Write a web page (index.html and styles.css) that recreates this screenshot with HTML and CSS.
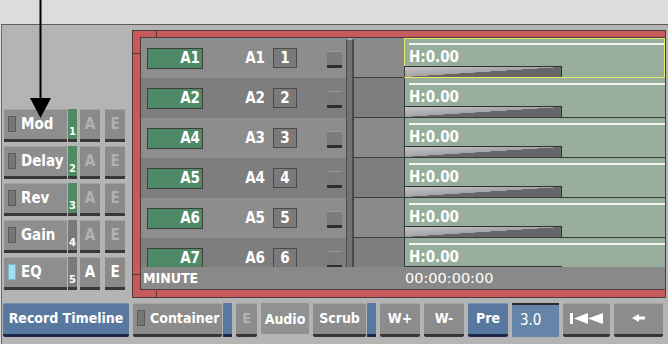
FILE: index.html
```html
<!DOCTYPE html>
<html lang="en">
  <head>
    <meta charset="UTF-8" />
    <title>Audio Tracks</title>
    <link rel="stylesheet" href="styles.css">
  </head>
  <body>
    <div class="top"></div>

    <div class="panel">
      <div class="main">
        <div class="fx">
          <div class="fx-row">
            <div class="fx-btn"><span class="led"></span>Mod</div>
            <div class="strip green">1</div>
            <div class="sq dim">A</div>
            <div class="sq sq-e dim">E</div>
          </div>
          <div class="fx-row">
            <div class="fx-btn"><span class="led"></span>Delay</div>
            <div class="strip green">2</div>
            <div class="sq dim">A</div>
            <div class="sq sq-e dim">E</div>
          </div>
          <div class="fx-row">
            <div class="fx-btn"><span class="led"></span>Rev</div>
            <div class="strip green">3</div>
            <div class="sq dim">A</div>
            <div class="sq sq-e dim">E</div>
          </div>
          <div class="fx-row">
            <div class="fx-btn"><span class="led"></span>Gain</div>
            <div class="strip">4</div>
            <div class="sq dim">A</div>
            <div class="sq sq-e dim">E</div>
          </div>
          <div class="fx-row">
            <div class="fx-btn"><span class="led lit"></span>EQ</div>
            <div class="strip">5</div>
            <div class="sq">A</div>
            <div class="sq sq-e">E</div>
          </div>
        </div>

        <div class="frame">
          <div class="tracks">
            <div class="list">
              <div class="heads">
                <div class="head"><span class="name">A1</span><span class="label">A1</span><span class="num">1</span><span class="mute"></span></div>
                <div class="head"><span class="name">A2</span><span class="label">A2</span><span class="num">2</span><span class="mute"></span></div>
                <div class="head"><span class="name">A4</span><span class="label">A3</span><span class="num">3</span><span class="mute"></span></div>
                <div class="head"><span class="name">A5</span><span class="label">A4</span><span class="num">4</span><span class="mute"></span></div>
                <div class="head"><span class="name">A6</span><span class="label">A5</span><span class="num">5</span><span class="mute"></span></div>
                <div class="head"><span class="name">A7</span><span class="label">A6</span><span class="num">6</span><span class="mute"></span></div>
              </div>
              <div class="scroll"></div>
              <div class="lanes">
                <div class="lane"><div class="cell"></div><div class="clip selected"><div class="clip-line"></div><div class="clip-text">H:0.00</div><div class="ramp"></div></div></div>
                <div class="lane"><div class="cell"></div><div class="clip"><div class="clip-line"></div><div class="clip-text">H:0.00</div><div class="ramp"></div></div></div>
                <div class="lane"><div class="cell"></div><div class="clip"><div class="clip-line"></div><div class="clip-text">H:0.00</div><div class="ramp"></div></div></div>
                <div class="lane"><div class="cell"></div><div class="clip"><div class="clip-line"></div><div class="clip-text">H:0.00</div><div class="ramp"></div></div></div>
                <div class="lane"><div class="cell"></div><div class="clip"><div class="clip-line"></div><div class="clip-text">H:0.00</div><div class="ramp"></div></div></div>
                <div class="lane"><div class="cell"></div><div class="clip"><div class="clip-line"></div><div class="clip-text">H:0.00</div><div class="ramp"></div></div></div>
              </div>
            </div>
            <div class="timebar">
              <span class="unit">MINUTE</span>
              <span class="timecode">00:00:00:00</span>
            </div>
          </div>
        </div>
      </div>

      <div class="toolbar">
        <div class="btn blue w-record">Record Timeline</div>
        <div class="group">
          <div class="btn w-container"><span class="led"></span>Container</div>
          <div class="bar-strip"></div>
        </div>
        <div class="btn dim w-e">E</div>
        <div class="flat w-audio">Audio</div>
        <div class="group">
          <div class="btn w-scrub">Scrub</div>
          <div class="bar-strip"></div>
        </div>
        <div class="btn w-small">W+</div>
        <div class="btn w-small">W-</div>
        <div class="btn blue w-small">Pre</div>
        <div class="field">3.0</div>
        <div class="btn w-icon">
          <svg width="34" height="11" viewBox="0 0 34 11">
            <rect x="0" y="0" width="3" height="11" fill="#fff" />
            <polygon points="4,5.5 18,0 18,11" fill="#fff" />
            <polygon points="18,5.5 33,0 33,11" fill="#fff" />
          </svg>
        </div>
        <div class="btn w-last">
          <svg width="14" height="8" viewBox="0 0 14 8">
            <polygon points="0,4 7,0 7,8" fill="#fff" />
            <rect x="7" y="2.5" width="6" height="3" fill="#fff" />
          </svg>
        </div>
      </div>
    </div>

    <svg class="pointer" width="60" height="120" viewBox="0 0 60 120">
      <line x1="40.5" y1="0" x2="40.5" y2="100" stroke="#000" stroke-width="2" />
      <polygon points="30,98 51,98 40.5,118" fill="#000" />
    </svg>
  </body>
</html>
```

FILE: styles.css
```css
body {
  margin: 0;
  width: 668px;
  height: 344px;
  overflow: hidden;
  position: relative;
  background-color: #dcdcdc;
  color: #fff;
  font-family: "DejaVu Sans", "Liberation Sans", sans-serif;
  font-stretch: condensed;
  font-weight: bold;
  font-size: 15px;
}

.top {
  height: 24px;
}

.pointer {
  position: absolute;
  left: 0;
  top: 0;
}

.panel {
  height: 319px;
  margin-left: 1px;
  border-top: 1px solid #5e5e5e;
  border-left: 1px solid #6e6e6e;
  background-color: #b4b4b4;
}

.main {
  display: flex;
  padding-top: 5px;
}

/* effect buttons */

.fx {
  width: 128px;
  padding: 79px 0 0 2px;
  display: flex;
  flex-direction: column;
  gap: 4px;
}

.fx-row {
  display: flex;
  height: 33px;
}

.fx-btn {
  width: 63px;
  box-sizing: border-box;
  display: flex;
  align-items: center;
  padding: 0 0 2px 4px;
  background-color: #8e8e8e;
  border-top: 1px solid #a2a2a2;
  border-bottom: 3px solid #383838;
}

.led {
  width: 8px;
  height: 16px;
  box-sizing: border-box;
  margin-right: 5px;
  background-color: #767676;
  border: 1px solid #5c5c5c;
}

.led.lit {
  background-color: #a4def6;
  border-color: #7ab6cc;
}

.strip {
  width: 9px;
  margin-left: 1px;
  box-sizing: border-box;
  padding: 0 0 1px 1px;
  display: flex;
  align-items: flex-end;
  font-size: 11px;
  line-height: 12px;
  background-color: #7a7a7a;
  border-bottom: 3px solid #383838;
}

.strip.green {
  background-color: #4f8a62;
}

.sq {
  width: 20px;
  margin-left: 3px;
  box-sizing: border-box;
  display: flex;
  align-items: center;
  justify-content: center;
  padding-bottom: 2px;
  background-color: #8a8a8a;
  border-top: 1px solid #a0a0a0;
  border-bottom: 3px solid #383838;
}

.sq-e {
  margin-left: 5px;
}

.dim {
  color: #b2b2b2;
}

/* track frame */

.frame {
  position: relative;
  width: 534px;
  height: 268px;
  box-sizing: border-box;
  padding: 6px 0 6px 7px;
  background-color: #c75a5a;
  border: 1px solid #4e3a3a;
}

.frame::before {
  content: "";
  position: absolute;
  left: 23px;
  top: 0;
  width: 1px;
  height: 6px;
  background-color: #4e3a3a;
  box-shadow: 0 260px 0 #4e3a3a;
}

.frame::after {
  content: "";
  position: absolute;
  left: 0;
  top: 22px;
  width: 7px;
  height: 1px;
  background-color: #4e3a3a;
  box-shadow: 0 221px 0 #4e3a3a;
}

.tracks {
  border-top: 1px solid #4e3a3a;
  border-left: 1px solid #4e3a3a;
  border-bottom: 1px solid #4e3a3a;
  background-color: #8a8a8a;
}

.list {
  display: flex;
  height: 229px;
  overflow: hidden;
}

.heads {
  width: 205px;
}

.head {
  height: 40px;
  display: flex;
  align-items: center;
  padding-left: 6px;
  background-color: #8d8d8d;
}

.head:nth-child(even) {
  background-color: #7e7e7e;
}

.name {
  width: 56px;
  height: 21px;
  box-sizing: border-box;
  padding-right: 2px;
  text-align: right;
  line-height: 19px;
  background-color: #4e8a68;
  border: 1px solid #3e3e3e;
}

.label {
  width: 70px;
  box-sizing: border-box;
  padding-right: 8px;
  text-align: right;
}

.num {
  width: 24px;
  height: 20px;
  box-sizing: border-box;
  text-align: center;
  line-height: 18px;
  background-color: #7a7a7a;
  border: 1px solid #4a4a4a;
}

.mute {
  width: 15px;
  height: 17px;
  margin: 2px 0 0 30px;
  box-sizing: border-box;
  background-color: #7c7c7c;
  border-top: 1px solid #9a9a9a;
  border-bottom: 3px solid #2e2e2e;
  border-radius: 1px;
}

.scroll {
  width: 8px;
  box-sizing: border-box;
  background-color: #727272;
  border-left: 1px solid #4a4a4a;
  border-right: 2px solid #4a4a4a;
  border-top: 2px solid #a8a8a8;
}

.lanes {
  flex: 1;
}

.lane {
  height: 40px;
  display: flex;
}

.cell {
  width: 50px;
  box-sizing: border-box;
  background-color: #8a8a8a;
  border-bottom: 1px solid #3c3c3c;
}

.lane:nth-child(even) .cell {
  background-color: #7e7e7e;
}

.clip {
  flex: 1;
  box-sizing: border-box;
  display: flex;
  flex-direction: column;
  background-color: #98ae9c;
  border-left: 1px solid #3c3c3c;
  border-bottom: 1px solid #3c3c3c;
}

.clip.selected {
  border: 1px solid #e8e866;
}

.clip-line {
  height: 2px;
  margin: 5px 0 0 4px;
  background-color: #f4f4f4;
}

.selected .clip-line {
  margin-top: 4px;
}

.clip-text {
  margin-top: 4px;
  padding-left: 4px;
  line-height: 17px;
  font-size: 15px;
}

.ramp {
  width: 158px;
  height: 12px;
  margin: auto 0 0 -1px;
  box-sizing: border-box;
  border-top: 1px solid #333;
  border-right: 1px solid #333;
  border-left: 1px solid #3c3c3c;
  background: linear-gradient(to bottom right, #c4c4c4 0%, #a4a4a4 49.5%, #666 50.5%, #666 100%);
}

.timebar {
  height: 22px;
  display: flex;
  align-items: center;
  background-color: #898989;
}

.unit {
  width: 262px;
  padding-left: 2px;
  font-size: 14px;
}

.timecode {
  font-weight: normal;
  font-stretch: normal;
  font-size: 14.5px;
}

/* bottom toolbar */

.toolbar {
  display: flex;
  gap: 4px;
  padding: 5px 0 0 1px;
  font-size: 14px;
}

.group {
  display: flex;
  gap: 1px;
}

.btn {
  height: 34px;
  box-sizing: border-box;
  display: flex;
  align-items: center;
  justify-content: center;
  padding-bottom: 2px;
  background-color: #8c8c8c;
  border-top: 1px solid #a4a4a4;
  border-bottom: 3px solid #363636;
  border-radius: 2px;
}

.btn.blue {
  background-color: #5878a0;
  border-top-color: #7492b6;
  border-bottom-color: #1e2848;
}

.btn .led {
  margin: 0 5px 0 0;
}

.bar-strip {
  width: 9px;
  height: 34px;
  box-sizing: border-box;
  background-color: #5878a0;
  border-bottom: 3px solid #1e2848;
}

.flat {
  height: 31px;
  display: flex;
  align-items: center;
  justify-content: center;
  background-color: #919191;
}

.field {
  width: 47px;
  height: 34px;
  box-sizing: border-box;
  padding: 0 0 2px 8px;
  display: flex;
  align-items: center;
  font-weight: normal;
  font-size: 15px;
  background-color: #6585a8;
  border-top: 2px solid #2c2c2c;
}

.w-record { width: 126px; }
.w-container { width: 89px; justify-content: flex-start; padding-left: 4px; }
.w-e { width: 21px; }
.w-audio { width: 48px; }
.w-scrub { width: 53px; }
.w-small { width: 40px; }
.w-icon { width: 47px; }
.w-last { width: 49px; }
```
